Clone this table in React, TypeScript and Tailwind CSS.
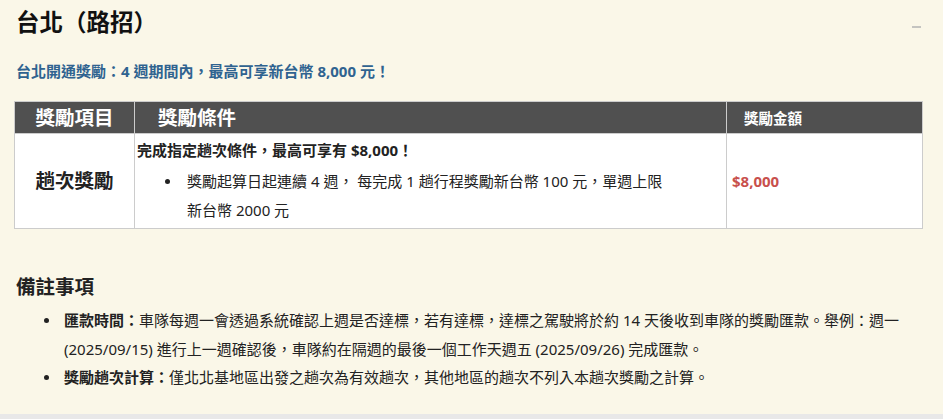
import React from 'react'

const FONT = { fontFamily: '"Noto Sans", "Noto Sans CJK TC", sans-serif' }

function Bullet({ children, pos }: { children: React.ReactNode; pos: string }) {
  return (
    <li className="relative">
      <span className={`absolute ${pos} w-[5px] h-[5px] rounded-full bg-[#222]`} />
      {children}
    </li>
  )
}

// ── Reward table ─────────────────────────────────────────────────────────────

function RewardTable() {
  return (
    <table className="w-[908px] ml-[-2px] border-collapse border border-[#cccccc] table-fixed">
      <colgroup>
        <col className="w-[120px]" />
        <col className="w-[592px]" />
        <col className="w-[196px]" />
      </colgroup>
      <thead>
        <tr className="bg-[#505050] text-white h-[32px]">
          <th className="border border-[#cccccc] text-[19.5px] font-bold text-center leading-[30px]">獎勵項目</th>
          <th className="border border-[#cccccc] text-[19.5px] font-bold text-left pl-[23px] leading-[30px]">獎勵條件</th>
          <th className="border border-[#cccccc] text-[14.5px] font-bold text-left pl-[17px] leading-[30px]">獎勵金額</th>
        </tr>
      </thead>
      <tbody>
        <tr className="bg-white h-[95px]">
          <td className="border border-[#cccccc] text-center text-[19.5px] font-bold text-[#222]">趟次獎勵</td>
          <td className="border border-[#cccccc] align-top pl-[2px] pt-[5px] text-[15px] text-[#222]">
            <p className="font-bold leading-[22px]">完成指定趟次條件，最高可享有 $8,000！</p>
            <ul className="list-none pl-[50px] mt-[6px] leading-[29px]">
              <Bullet pos="left-[-22px] top-[12px]">
                獎勵起算日起連續 4 週， 每完成 1 趟行程獎勵新台幣 100 元，單週上限<br />新台幣 2000 元
              </Bullet>
            </ul>
          </td>
          <td className="border border-[#cccccc] pl-[5px] text-[15px] font-bold text-[#c8504c]">$8,000</td>
        </tr>
      </tbody>
    </table>
  )
}

// ── Notes ────────────────────────────────────────────────────────────────────

function Notes() {
  return (
    <div className="mt-[44px]">
      <h2 className="text-[19.5px] font-bold text-[#222] leading-[28px]">備註事項</h2>
      <ul className="list-none pl-[48px] mt-[5px] text-[15px] text-[#222] leading-[28.5px]">
        <Bullet pos="left-[-20px] top-[12px]">
          <b>匯款時間：</b>車隊每週一會透過系統確認上週是否達標，若有達標，達標之駕駛將於約 14 天後收到車隊的獎勵匯款。舉例：週一 (2025/09/15) 進行上一週確認後，車隊約在隔週的最後一個工作天週五 (2025/09/26) 完成匯款。
        </Bullet>
        <Bullet pos="left-[-20px] top-[12px]">
          <b>獎勵趟次計算：</b>僅北北基地區出發之趟次為有效趟次，其他地區的趟次不列入本趟次獎勵之計算。
        </Bullet>
      </ul>
    </div>
  )
}

export default function App() {
  return (
    <div className="w-[943px] h-[419px] bg-[#faf7e8] flex flex-col overflow-hidden" style={FONT}>
      <div className="flex-1 pl-[16px] pr-[22px] pt-[6px]">
        <div className="flex justify-between items-start">
          <h1 className="text-[23.5px] font-bold text-[#111] leading-[32px]">台北（路招）</h1>
          <div className="w-[9px] h-[2px] bg-[#c4c4c0] mt-[20px]" />
        </div>
        <p className="mt-[21px] text-[15px] font-bold text-[#2f6390] leading-[24px]">
          台北開通獎勵：4 週期間內，最高可享新台幣 8,000 元！
        </p>
        <div className="mt-[18px]">
          <RewardTable />
        </div>
        <Notes />
      </div>
      <div className="h-[5px] bg-[#e8e8e8]" />
    </div>
  )
}
